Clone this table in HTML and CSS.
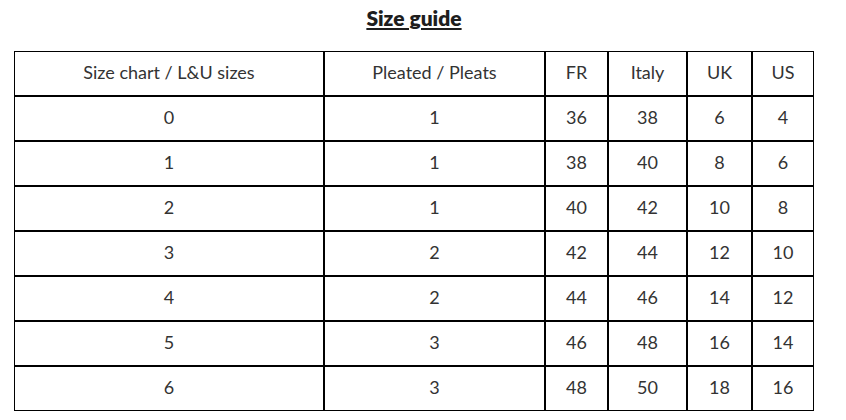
FILE: index.html
```html
<!DOCTYPE html>
<html lang="en">
<head>
<meta charset="utf-8">
<title>Size guide</title>
<link rel="stylesheet" href="styles.css">
</head>
<body>
<div class="guide">
  <h2 class="title">Size guide</h2>
  <table class="sizes">
    <thead>
      <tr>
        <th class="c1">Size chart / L&amp;U sizes</th>
        <th class="c2">Pleated / Pleats</th>
        <th class="c3">FR</th>
        <th class="c4">Italy</th>
        <th class="c5">UK</th>
        <th class="c6">US</th>
      </tr>
    </thead>
    <tbody>
      <tr><td>0</td><td>1</td><td>36</td><td>38</td><td>6</td><td>4</td></tr>
      <tr><td>1</td><td>1</td><td>38</td><td>40</td><td>8</td><td>6</td></tr>
      <tr><td>2</td><td>1</td><td>40</td><td>42</td><td>10</td><td>8</td></tr>
      <tr><td>3</td><td>2</td><td>42</td><td>44</td><td>12</td><td>10</td></tr>
      <tr><td>4</td><td>2</td><td>44</td><td>46</td><td>14</td><td>12</td></tr>
      <tr><td>5</td><td>3</td><td>46</td><td>48</td><td>16</td><td>14</td></tr>
      <tr><td>6</td><td>3</td><td>48</td><td>50</td><td>18</td><td>16</td></tr>
    </tbody>
  </table>
</div>
</body>
</html>
```
FILE: styles.css
```css
html, body {
  margin: 0;
  padding: 0;
  background: #ffffff;
}

body {
  font-family: Lato, "Liberation Sans", sans-serif;
  color: #2a2a2a;
}

.guide {
  width: 800px;
  padding: 7px 0 0 14px;
}

.title {
  margin: 0 0 22px 0;
  font-size: 21px;
  line-height: 22px;
  font-weight: 800;
  text-align: center;
  text-decoration: underline;
  text-decoration-thickness: 2px;
  text-underline-offset: 2px;
  color: #1e1e1e;
}

.sizes {
  width: 800px;
  table-layout: fixed;
  border-collapse: separate;
  border-spacing: 0;
}

.sizes th,
.sizes td {
  box-sizing: border-box;
  border: 1px solid #000;
  padding: 0 0 3px 0;
  text-align: center;
  vertical-align: middle;
  font-size: 18px;
  font-weight: 400;
  color: #333333;
}

.sizes tr {
  height: 45px;
}

.c1 { width: 310px; }
.c2 { width: 221px; }
.c3 { width: 63px; }
.c4 { width: 79px; }
.c5 { width: 65px; }
.c6 { width: 62px; }
```
